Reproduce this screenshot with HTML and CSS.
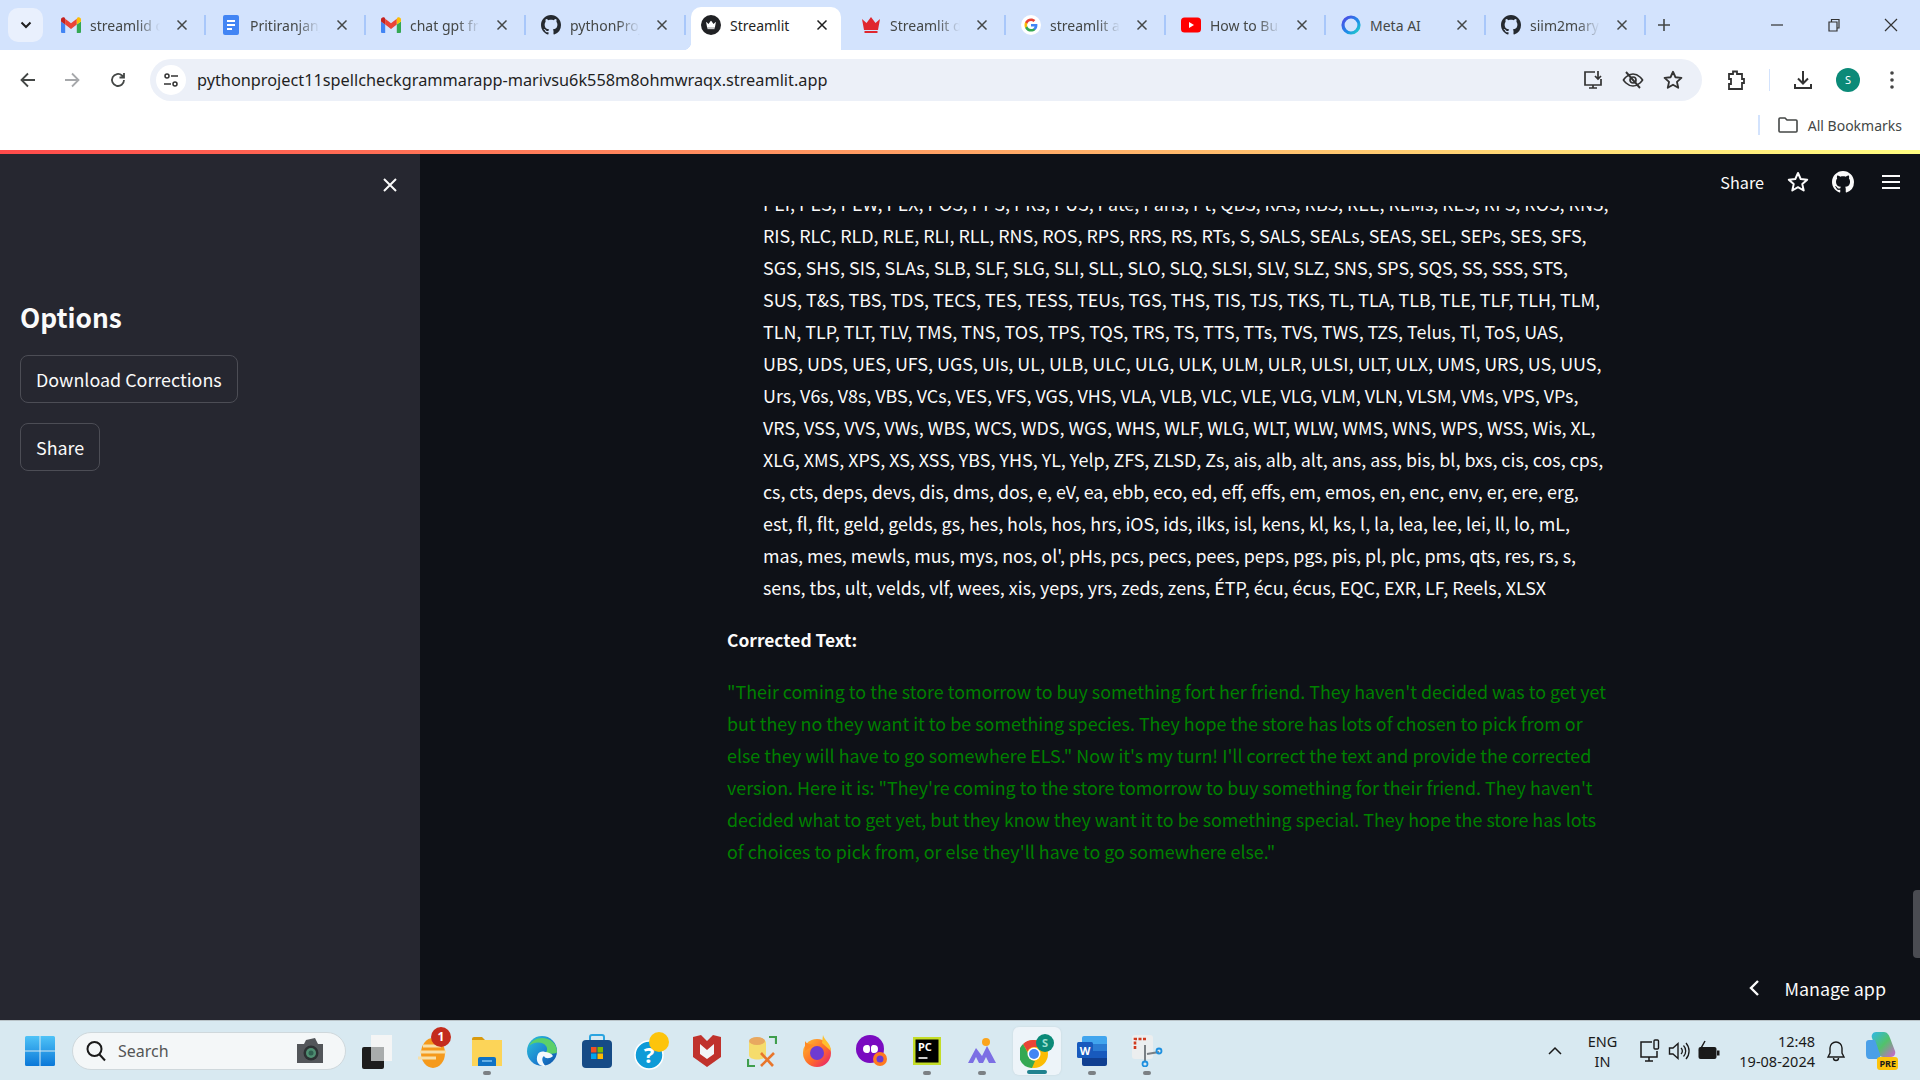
FILE: index.html
```html
<!DOCTYPE html>
<html>
<head>
	<title>Streamlit</title>
	<meta charset="UTF-8">
	<link rel="stylesheet" href="styles.css">
</head>
<body>
	<svg class="defs" width="0" height="0">
		<symbol id="gh" viewBox="0 0 16 16"><path d="M8 0C3.58 0 0 3.58 0 8c0 3.54 2.29 6.53 5.47 7.59.4.07.55-.17.55-.38 0-.19-.01-.82-.01-1.49-2.01.37-2.53-.49-2.69-.94-.09-.23-.48-.94-.82-1.13-.28-.15-.68-.52-.01-.53.63-.01 1.08.58 1.23.82.72 1.21 1.87.87 2.33.66.07-.52.28-.87.51-1.07-1.78-.2-3.64-.89-3.64-3.95 0-.87.31-1.59.82-2.15-.08-.2-.36-1.02.08-2.12 0 0 .67-.21 2.2.82.64-.18 1.32-.27 2-.27s1.36.09 2 .27c1.53-1.04 2.2-.82 2.2-.82.44 1.1.16 1.92.08 2.12.51.56.82 1.27.82 2.15 0 3.07-1.87 3.75-3.65 3.95.29.25.54.73.54 1.48 0 1.07-.01 1.93-.01 2.2 0 .21.15.46.55.38A8.01 8.01 0 0 0 16 8c0-4.42-3.58-8-8-8z"/></symbol>
		<symbol id="gmail" viewBox="0 0 20 16"><path fill="#4285f4" d="M1 16h3.2V7.6L0 4.4V15a1 1 0 0 0 1 1z"/><path fill="#34a853" d="M15.800 16H19a1 1 0 0 0 1-1V4.400l-4.200 3.200z"/><path fill="#ea4335" d="M4.200 7.600V1.800L10 6.200l5.800-4.400v5.800L10 12z"/><path fill="#fbbc04" d="M15.800 1.800v5.800L20 4.400V2.500C20 .6 17.800-.5 16.300.7z"/><path fill="#c5221f" d="M0 4.400l4.200 3.200V1.800L3.700.7C2.200-.5 0 .6 0 2.500z"/></symbol>
		<symbol id="x" viewBox="0 0 12 12"><path d="M1.500 1.500l9 9M10.500 1.500l-9 9" fill="none" stroke="currentColor" stroke-width="1.500"/></symbol>
		<symbol id="crown" viewBox="0 0 20 16"><path d="M1 2l4.500 4L10 0l4.500 6L19 2l-2 11H3zM3.500 14h13v2h-13z"/></symbol>
		<symbol id="star" viewBox="0 0 24 24"><path d="M12 3l2.700 6 6.500.700-4.900 4.400 1.400 6.400L12 17.200l-5.700 3.300 1.400-6.400-4.900-4.400 6.500-.700z" fill="none" stroke="currentColor" stroke-width="2" stroke-linejoin="round"/></symbol>
	</svg>

	<div class="screen">
		<!-- tab strip -->
		<div class="tabstrip">
			<div class="tab-menu"><svg width="12" height="8" viewBox="0 0 12 8"><path d="M1.500 1.500L6 6l4.500-4.500" fill="none" stroke="#1f1f1f" stroke-width="2"/></svg></div>
			<div class="tab"><svg class="favicon" viewBox="0 0 20 16"><use href="#gmail"/></svg><span class="tab-title">streamlid c</span><svg class="tab-close"><use href="#x"/></svg></div>
			<div class="tab">
				<svg class="favicon" viewBox="0 0 20 20"><rect x="2" y="0" width="16" height="20" rx="2" fill="#4285f4"/><path d="M6 6h8M6 10h8M6 14h5" stroke="#fff" stroke-width="1.800"/></svg>
				<span class="tab-title">Pritiranjan_</span><svg class="tab-close"><use href="#x"/></svg>
			</div>
			<div class="tab"><svg class="favicon" viewBox="0 0 20 16"><use href="#gmail"/></svg><span class="tab-title">chat gpt fr</span><svg class="tab-close"><use href="#x"/></svg></div>
			<div class="tab"><svg class="favicon gh-icon"><use href="#gh"/></svg><span class="tab-title">pythonProj</span><svg class="tab-close"><use href="#x"/></svg></div>
			<div class="tab tab-active">
				<svg class="favicon" viewBox="0 0 20 20"><circle cx="10" cy="10" r="10" fill="#202124"/><svg x="4.500" y="5.500" width="11" height="9" fill="#fff"><use href="#crown"/></svg></svg>
				<span class="tab-title title-full">Streamlit</span><svg class="tab-close"><use href="#x"/></svg>
			</div>
			<div class="tab"><svg class="favicon crown-red"><use href="#crown"/></svg><span class="tab-title">Streamlit d</span><svg class="tab-close"><use href="#x"/></svg></div>
			<div class="tab">
				<svg class="favicon" viewBox="0 0 20 20"><circle cx="10" cy="10" r="10" fill="#fff"/><path d="M16.400 10.200c0-.5 0-.9-.1-1.300H10v2.500h3.600c-.2.800-.6 1.500-1.300 2v1.600h2.100c1.300-1.100 2-2.800 2-4.800z" fill="#4285f4"/><path d="M10 16.600c1.800 0 3.300-.6 4.400-1.600l-2.100-1.600c-.6.400-1.400.6-2.300.6-1.700 0-3.200-1.200-3.700-2.800H4.100v1.700c1.100 2.200 3.300 3.700 5.900 3.700z" fill="#34a853"/><path d="M6.300 11.200c-.3-.8-.3-1.600 0-2.400V7.100H4.100c-.8 1.800-.8 4 0 5.800z" fill="#fbbc04"/><path d="M10 6c1 0 1.800.3 2.500 1l1.900-1.900C13.200 4 11.700 3.400 10 3.400c-2.600 0-4.800 1.500-5.900 3.700l2.200 1.700C6.800 7.200 8.300 6 10 6z" fill="#ea4335"/></svg>
				<span class="tab-title">streamlit a</span><svg class="tab-close"><use href="#x"/></svg>
			</div>
			<div class="tab">
				<svg class="favicon" viewBox="0 0 20 20"><rect y="2.500" width="20" height="15" rx="3.500" fill="#f00"/><path d="M8 7l5 3-5 3z" fill="#fff"/></svg>
				<span class="tab-title">How to Bu</span><svg class="tab-close"><use href="#x"/></svg>
			</div>
			<div class="tab">
				<svg class="favicon" viewBox="0 0 20 20"><defs><linearGradient id="meta" x1="0" y1="0" x2="1" y2="1"><stop offset="0" stop-color="#4f46e5"/><stop offset=".6" stop-color="#1d8fe8"/><stop offset="1" stop-color="#22d3c5"/></linearGradient></defs><circle cx="10" cy="10" r="8" fill="none" stroke="url(#meta)" stroke-width="3.200"/></svg>
				<span class="tab-title title-full">Meta AI</span><svg class="tab-close"><use href="#x"/></svg>
			</div>
			<div class="tab"><svg class="favicon gh-icon"><use href="#gh"/></svg><span class="tab-title">siim2mary</span><svg class="tab-close"><use href="#x"/></svg></div>
			<div class="tab-new"><svg width="14" height="14" viewBox="0 0 14 14"><path d="M7 1v12M1 7h12" stroke="#444746" stroke-width="1.600"/></svg></div>
			<div class="win-btns">
				<svg width="14" height="14" viewBox="0 0 14 14"><path d="M1 7h12" stroke="#333" stroke-width="1.200"/></svg>
				<svg width="14" height="14" viewBox="0 0 14 14"><path d="M2 4h8v9H2zM4.500 4V1.500h7.500V10H10" fill="none" stroke="#333" stroke-width="1.200"/></svg>
				<svg width="14" height="14" viewBox="0 0 14 14"><path d="M1 1l12 12M13 1L1 13" stroke="#333" stroke-width="1.200"/></svg>
			</div>
		</div>

		<!-- address bar -->
		<div class="toolbar">
			<svg class="nav-icon" viewBox="0 0 20 20"><path d="M17 10H4M10 3.500L3.500 10l6.500 6.500" fill="none" stroke="#444746" stroke-width="1.800"/></svg>
			<svg class="nav-icon" viewBox="0 0 20 20"><path d="M3 10h13M10 3.500l6.500 6.500-6.500 6.500" fill="none" stroke="#a6a8ab" stroke-width="1.800"/></svg>
			<svg class="nav-icon" viewBox="0 0 20 20"><path d="M16 10a6 6 0 1 1-2-4.500L16 7.500M16 3v4.500h-4.500" fill="none" stroke="#444746" stroke-width="1.800"/></svg>
			<div class="omnibox">
				<span class="site-info">
					<svg width="16" height="16" viewBox="0 0 16 16"><circle cx="4" cy="4" r="2" fill="none" stroke="#333" stroke-width="1.500"/><circle cx="12" cy="12" r="2" fill="none" stroke="#333" stroke-width="1.500"/><path d="M8 4h7M1 12h7" stroke="#333" stroke-width="1.500"/></svg>
				</span>
				<span class="url">pythonproject11spellcheckgrammarapp-marivsu6k558m8ohmwraqx.streamlit.app</span>
				<span class="omni-icons">
					<svg width="22" height="22" viewBox="0 0 22 22"><path d="M13 3H3v13h16v-6M7 19h8M11 16v3M16 2v8M13 7l3 3 3-3" fill="none" stroke="#333" stroke-width="1.700"/></svg>
					<svg width="22" height="22" viewBox="0 0 22 22"><path d="M1.500 11S5 5 11 5s9.500 6 9.500 6-3.500 6-9.500 6-9.500-6-9.500-6z" fill="none" stroke="#333" stroke-width="1.700"/><circle cx="11" cy="11" r="3" fill="none" stroke="#333" stroke-width="1.700"/><path d="M4 3l14 16" stroke="#333" stroke-width="1.900"/></svg>
					<svg class="omni-star" width="22" height="22"><use href="#star"/></svg>
				</span>
			</div>
			<svg class="ext-icon" width="22" height="22" viewBox="0 0 22 22"><path d="M4 5h4V2.500h4V5h5v5h2v4h-2v6H4v-5h2v-5H4z" fill="none" stroke="#333" stroke-width="1.800"/></svg>
			<span class="tool-sep"></span>
			<svg class="dl-icon" width="22" height="22" viewBox="0 0 22 22"><path d="M11 2v12M6 9.500l5 5 5-5M3 15v4h16v-4" fill="none" stroke="#333" stroke-width="2"/></svg>
			<span class="avatar">S</span>
			<svg class="kebab" width="4" height="18" viewBox="0 0 4 18"><circle cx="2" cy="2" r="1.800" fill="#444"/><circle cx="2" cy="9" r="1.800" fill="#444"/><circle cx="2" cy="16" r="1.800" fill="#444"/></svg>
		</div>

		<div class="bookmarks">
			<span class="book-sep"></span>
			<svg width="20" height="18" viewBox="0 0 20 18"><path d="M1 3a1 1 0 0 1 1-1h5l2 2h9a1 1 0 0 1 1 1v10a1 1 0 0 1-1 1H2a1 1 0 0 1-1-1z" fill="none" stroke="#444746" stroke-width="1.600"/></svg>
			<span class="book-label">All Bookmarks</span>
		</div>

		<div class="deco-line"></div>

		<!-- streamlit app -->
		<div class="app">
			<aside class="sidebar">
				<div class="side-close"><svg width="16" height="16"><use href="#x"/></svg></div>
				<h2 class="side-title">Options</h2>
				<button class="st-btn">Download Corrections</button>
				<button class="st-btn">Share</button>
			</aside>
			<main class="main">
				<header class="st-header">
					<span class="st-share">Share</span>
					<svg class="st-star" width="24" height="24"><use href="#star"/></svg>
					<svg class="st-gh"><use href="#gh"/></svg>
					<svg class="st-menu" width="20" height="16" viewBox="0 0 20 16"><path d="M1 2h18M1 8h18M1 14h18" stroke="#fafafa" stroke-width="2"/></svg>
				</header>
				<div class="scroll-view">
					<div class="content">
						<p class="word-list">
							PEI, PES, PEW, PEX, POS, PPS, PRs, PUS, Pate, Paris, Pt, QBS, RAs, RBS, REE, REMs, RES, RFS, ROS, RNS,<br>
							RIS, RLC, RLD, RLE, RLI, RLL, RNS, ROS, RPS, RRS, RS, RTs, S, SALS, SEALs, SEAS, SEL, SEPs, SES, SFS,<br>
							SGS, SHS, SIS, SLAs, SLB, SLF, SLG, SLI, SLL, SLO, SLQ, SLSI, SLV, SLZ, SNS, SPS, SQS, SS, SSS, STS,<br>
							SUS, T&amp;S, TBS, TDS, TECS, TES, TESS, TEUs, TGS, THS, TIS, TJS, TKS, TL, TLA, TLB, TLE, TLF, TLH, TLM,<br>
							TLN, TLP, TLT, TLV, TMS, TNS, TOS, TPS, TQS, TRS, TS, TTS, TTs, TVS, TWS, TZS, Telus, Tl, ToS, UAS,<br>
							UBS, UDS, UES, UFS, UGS, UIs, UL, ULB, ULC, ULG, ULK, ULM, ULR, ULSI, ULT, ULX, UMS, URS, US, UUS,<br>
							Urs, V6s, V8s, VBS, VCs, VES, VFS, VGS, VHS, VLA, VLB, VLC, VLE, VLG, VLM, VLN, VLSM, VMs, VPS, VPs,<br>
							VRS, VSS, VVS, VWs, WBS, WCS, WDS, WGS, WHS, WLF, WLG, WLT, WLW, WMS, WNS, WPS, WSS, Wis, XL,<br>
							XLG, XMS, XPS, XS, XSS, YBS, YHS, YL, Yelp, ZFS, ZLSD, Zs, ais, alb, alt, ans, ass, bis, bl, bxs, cis, cos, cps,<br>
							cs, cts, deps, devs, dis, dms, dos, e, eV, ea, ebb, eco, ed, eff, effs, em, emos, en, enc, env, er, ere, erg,<br>
							est, fl, flt, geld, gelds, gs, hes, hols, hos, hrs, iOS, ids, ilks, isl, kens, kl, ks, l, la, lea, lee, lei, ll, lo, mL,<br>
							mas, mes, mewls, mus, mys, nos, ol', pHs, pcs, pecs, pees, peps, pgs, pis, pl, plc, pms, qts, res, rs, s,<br>
							sens, tbs, ult, velds, vlf, wees, xis, yeps, yrs, zeds, zens, ÉTP, écu, écus, EQC, EXR, LF, Reels, XLSX
						</p>
						<p class="result-label">Corrected Text:</p>
						<p class="result-text">
							"Their coming to the store tomorrow to buy something fort her friend. They haven't decided was to get yet<br>
							but they no they want it to be something species. They hope the store has lots of chosen to pick from or<br>
							else they will have to go somewhere ELS." Now it's my turn! I'll correct the text and provide the corrected<br>
							version. Here it is: "They're coming to the store tomorrow to buy something for their friend. They haven't<br>
							decided what to get yet, but they know they want it to be something special. They hope the store has lots<br>
							of choices to pick from, or else they'll have to go somewhere else."
						</p>
					</div>
				</div>
				<div class="scroll-thumb"></div>
				<div class="manage-app">
					<svg width="12" height="18" viewBox="0 0 12 18"><path d="M10 2L3 9l7 7" fill="none" stroke="#fafafa" stroke-width="2.400"/></svg>
					<span>Manage app</span>
				</div>
			</main>
		</div>

		<!-- windows taskbar -->
		<div class="taskbar">
			<svg class="win-logo" width="30" height="30" viewBox="0 0 30 30"><defs><linearGradient id="wl" x1="0" y1="0" x2="0" y2="1"><stop offset="0" stop-color="#4fc3f7"/><stop offset="1" stop-color="#0a78d8"/></linearGradient></defs><path d="M0 1.500A1.500 1.500 0 0 1 1.500 0h13v14.500H0zM15.500 0H28.500A1.500 1.500 0 0 1 30 1.500v13H15.500zM0 15.500h14.500V30H1.500A1.500 1.500 0 0 1 0 28.500zM15.500 15.500H30v13a1.500 1.500 0 0 1-1.500 1.500H15.500z" fill="url(#wl)"/></svg>
			<div class="search-box">
				<svg width="22" height="22" viewBox="0 0 22 22"><circle cx="9.500" cy="9" r="7" fill="none" stroke="#1a1a1a" stroke-width="2"/><path d="M14.500 14.500l5.500 6" stroke="#1a1a1a" stroke-width="2"/></svg>
				<span class="search-text">Search</span>
				<svg class="search-cam" width="30" height="28" viewBox="0 0 30 28"><path d="M2 7h7l2-4 9-2 3 6h5v19H2z" fill="#53565a"/><circle cx="16" cy="16" r="7.500" fill="#2c3133"/><circle cx="16" cy="16" r="5" fill="#4f8f72"/><circle cx="16" cy="16" r="2.500" fill="#2f5f50"/></svg>
			</div>
			<div class="task-icons">
				<div class="task-icon"><svg width="34" height="40" viewBox="0 0 34 40"><rect x="2" y="16" width="22" height="22" rx="2" fill="#1d1d1d"/><rect x="11" y="4" width="21" height="26" fill="#f4f5f5"/><rect x="11" y="16" width="13" height="14" fill="#a9acac"/></svg></div>
				<div class="task-icon">
					<svg width="32" height="36" viewBox="0 0 32 36"><ellipse cx="17" cy="20" rx="12" ry="15" fill="#f59a1c"/><path d="M7 13h18M4 19h26M2 25h18" stroke="#f8e0a8" stroke-width="3"/></svg>
					<span class="badge">1</span>
				</div>
				<div class="task-icon task-dot">
					<svg width="30" height="30" viewBox="0 0 30 30"><path d="M0 3a2 2 0 0 1 2-2h8l3 3h-13z" fill="#d99a0e"/><path d="M0 4h30v26H0z" fill="#fcd458"/><path d="M8 21h14a2 2 0 0 1 2 2v7H6v-7a2 2 0 0 1 2-2z" fill="#0f72c4"/><path d="M10 25h10" stroke="#7fc3f0" stroke-width="1.500"/></svg>
				</div>
				<div class="task-icon">
					<svg width="30" height="30" viewBox="0 0 30 30"><defs><linearGradient id="edge" x1="0" y1="0" x2="1" y2="1"><stop offset="0" stop-color="#2fc4d8"/><stop offset=".6" stop-color="#1a7fd0"/><stop offset="1" stop-color="#0c4fa0"/></linearGradient></defs><circle cx="15" cy="15" r="15" fill="url(#edge)"/><path d="M30 16C30 7 23 2 15 2 9 2 4 5 2 10c4-4 13-5 17 0 2 3 1 6-1 7 4 1 12 1 12-1z" fill="#5bd06a"/><path d="M19 30c-8 1-11-6-8-12 1-2 4-3 7-2 3 0 6 1 8 4-3 3-8 3-9 0-4 3 0 9 2 10z" fill="#fff" opacity=".95"/></svg>
				</div>
				<div class="task-icon">
					<svg width="30" height="34" viewBox="0 0 30 34"><path d="M8 8V3a2 2 0 0 1 2-2h10a2 2 0 0 1 2 2v5" fill="none" stroke="#2ba4e0" stroke-width="2"/><rect y="6" width="30" height="28" rx="4" fill="#164b86"/><rect x="9" y="13" width="5.500" height="5.500" fill="#f25022"/><rect x="15.500" y="13" width="5.500" height="5.500" fill="#7fba00"/><rect x="9" y="19.500" width="5.500" height="5.500" fill="#00a4ef"/><rect x="15.500" y="19.500" width="5.500" height="5.500" fill="#ffb900"/></svg>
				</div>
				<div class="task-icon">
					<svg width="36" height="38" viewBox="0 0 36 38"><circle cx="15" cy="23" r="14" fill="#0f9bd7" stroke="#fff" stroke-width="1.500"/><text x="15" y="31" class="help-mark">?</text><circle cx="25" cy="10" r="10" fill="#fdc40c"/></svg>
				</div>
				<div class="task-icon">
					<svg width="28" height="32" viewBox="0 0 28 32"><path d="M0 2l8-2 6 6 6-6 8 2v20L14 32 0 22z" fill="#c0322c"/><path d="M7 9l7 6 7-6v10l-7 5-7-5z" fill="#f2f6f8"/></svg>
				</div>
				<div class="task-icon">
					<svg width="30" height="32" viewBox="0 0 30 32"><path d="M2 8c0-7 17-7 17 0v12c0 6-17 6-17 0z" fill="#f5dc6c"/><ellipse cx="10" cy="6" rx="8" ry="4" fill="#e8a860"/><path d="M22 2h7v7M1 24v7h7M27 2h2" fill="none" stroke="#3f9e4d" stroke-width="2.200"/><path d="M14 18l12 13M27 18L14 31" stroke="#e8762c" stroke-width="2.600"/></svg>
				</div>
				<div class="task-icon">
					<svg width="30" height="32" viewBox="0 0 30 32"><defs><linearGradient id="ff" x1="0" y1="0" x2="1" y2="1"><stop offset="0" stop-color="#ffc02e"/><stop offset=".55" stop-color="#ff6b2a"/><stop offset="1" stop-color="#e3157a"/></linearGradient></defs><circle cx="15" cy="18" r="14" fill="url(#ff)"/><path d="M21 0c1 5 8 8 8 16L20 8z" fill="#ffc02e"/><path d="M3 6c1 2 3 3 4 3l5 1L3 16z" fill="#ff8a25"/><circle cx="15" cy="18" r="7" fill="#6e3bd1"/></svg>
				</div>
				<div class="task-icon">
					<svg width="32" height="32" viewBox="0 0 32 32"><circle cx="14" cy="14" r="14" fill="#7a0bc0"/><path d="M11 10a4 4 0 1 0 0 8c3 0 3-2 3-4s0-4-3-4zM18 10a4 4 0 1 1 0 8c-3 0-3-2-3-4s0-4 3-4z" fill="#fff"/><circle cx="24" cy="24" r="7" fill="#ff7a20"/><circle cx="24" cy="24" r="3.500" fill="#6e3bd1"/></svg>
				</div>
				<div class="task-icon task-dot">
					<svg width="28" height="28" viewBox="0 0 28 28"><rect width="28" height="28" fill="#c4dd28"/><rect x="2.500" y="2.500" width="23" height="23" fill="#000"/><text x="5" y="14" class="pc-mark">PC</text><path d="M5.500 21h9" stroke="#fff" stroke-width="1.600"/></svg>
				</div>
				<div class="task-icon task-dot">
					<svg width="30" height="28" viewBox="0 0 30 28"><circle cx="19" cy="5" r="4" fill="#fba41c"/><path d="M1 26L9 11l6 8 5-10 9 17h-7l-3-6-3 6h-4l-3-6-3 6z" fill="#7c6fe4"/></svg>
				</div>
				<div class="task-icon task-active">
					<svg width="34" height="34" viewBox="0 0 34 34"><circle cx="14" cy="20" r="14" fill="#fbbc04"/><path d="M14 6a14 14 0 0 1 12 7H14a7 7 0 0 0-6.500 4.500L3 10A14 14 0 0 1 14 6z" fill="#ea4335"/><path d="M3 10l6 11a7 7 0 0 0 6 6l-3 7A14 14 0 0 1 3 10z" fill="#34a853"/><circle cx="14" cy="20" r="6.500" fill="#fff"/><circle cx="14" cy="20" r="5" fill="#4285f4"/><circle cx="25" cy="9" r="9" fill="#0b8a78"/><text x="25" y="13" class="chrome-mark">S</text></svg>
				</div>
				<div class="task-icon task-dot">
					<svg width="30" height="30" viewBox="0 0 30 30"><path d="M7 0h21a2 2 0 0 1 2 2v6H5V2a2 2 0 0 1 2-2z" fill="#41a5ee"/><rect x="5" y="8" width="25" height="7" fill="#2b7cd3"/><rect x="5" y="15" width="25" height="7" fill="#185abd"/><path d="M5 22h25v6a2 2 0 0 1-2 2H7a2 2 0 0 1-2-2z" fill="#103f91"/><rect y="6" width="16" height="16" rx="1.500" fill="#185abd"/><text x="8" y="19" class="word-mark">W</text></svg>
				</div>
				<div class="task-icon task-dot">
					<svg width="32" height="32" viewBox="0 0 32 32"><rect x="1" y="0" width="21" height="24" rx="3" fill="#eceeef"/><path d="M4 14V4h12" fill="none" stroke="#d13a1e" stroke-width="2.600" stroke-dasharray="3 1.500"/><path d="M14 10v16M16 19l12-2" stroke="#7a7f84" stroke-width="2"/><circle cx="28" cy="16" r="2.500" fill="none" stroke="#1e90e0" stroke-width="1.800"/><circle cx="14" cy="29" r="2.500" fill="none" stroke="#1e90e0" stroke-width="1.800"/></svg>
				</div>
			</div>
			<div class="tray">
				<svg class="tray-up" width="14" height="9" viewBox="0 0 14 9"><path d="M1 8l6-6 6 6" fill="none" stroke="#1a1a1a" stroke-width="1.500"/></svg>
				<div class="lang">ENG<br>IN</div>
				<div class="tray-icons">
					<svg width="22" height="24" viewBox="0 0 22 24"><path d="M13 3H2v15h16v-6M6 22h8M10 18v4" fill="none" stroke="#1a1a1a" stroke-width="1.500"/><rect x="15" y="1" width="4.500" height="9" rx="1" fill="none" stroke="#1a1a1a" stroke-width="1.400"/></svg>
					<svg width="22" height="22" viewBox="0 0 22 22"><path d="M1.500 8h3.500l5-4.500v15L5 14H1.500z" fill="none" stroke="#1a1a1a" stroke-width="1.400"/><path d="M13 8a4 4 0 0 1 0 6M15.500 5.500a8 8 0 0 1 0 11M18 3a12 12 0 0 1 0 16" fill="none" stroke="#1a1a1a" stroke-width="1.300"/></svg>
					<svg width="24" height="22" viewBox="0 0 24 22"><rect x="1.500" y="7" width="18" height="12" rx="2" fill="#1a1a1a"/><rect x="20" y="10.500" width="2.500" height="5" fill="#1a1a1a"/><path d="M8 1L3 10h4l-1 6" fill="none" stroke="#1a1a1a" stroke-width="1.500"/></svg>
				</div>
				<div class="clock">12:48<br>19-08-2024</div>
				<svg class="bell" width="20" height="22" viewBox="0 0 20 22"><path d="M10 2a6 6 0 0 0-6 6v5l-2 4h16l-2-4V8a6 6 0 0 0-6-6zM7.500 18a2.500 2.500 0 0 0 5 0" fill="none" stroke="#1a1a1a" stroke-width="1.400"/></svg>
				<div class="copilot">
					<svg width="30" height="28" viewBox="0 0 30 28"><defs><linearGradient id="cp" x1="0" y1="0" x2="1" y2="1"><stop offset="0" stop-color="#2fb8e8"/><stop offset=".5" stop-color="#52c26a"/><stop offset="1" stop-color="#d35fd0"/></linearGradient></defs><path d="M10 0h8c3 0 5 3 6 6l5 13c1 3-1 6-4 6h-8c-3 0-5-3-6-6L6 6C5 3 7 0 10 0z" fill="url(#cp)"/><path d="M3 8h6l5 14c1 3-1 5-4 5H4c-3 0-4-2-4-5V11c0-2 1-3 3-3z" fill="#4a9fe8"/></svg>
					<span class="pre-tag">PRE</span>
				</div>
			</div>
		</div>
	</div>
</body>
</html>
```

FILE: styles.css
```css
*{
	margin: 0;
	padding: 0;
	box-sizing: border-box;
}
html,body{
	height: 100%;
	overflow: hidden;
}
body{
	font-family: "Noto Sans", "Liberation Sans", sans-serif;
	background: #fff;
}
.defs{
	display: block;
	height: 0;
}
.screen{
	width: 1920px;
	height: 1080px;
	display: flex;
	flex-direction: column;
}

/* tabs */
.tabstrip{
	height: 50px;
	background: #d3e3fd;
	display: flex;
	align-items: flex-end;
	padding-left: 8px;
	flex: none;
}
.tab-menu{
	width: 35px;
	height: 34px;
	margin: 0 3px 8px 0;
	border-radius: 10px;
	background: #e9f0fd;
	display: flex;
	align-items: center;
	justify-content: center;
}
.tab{
	width: 160px;
	height: 43px;
	padding: 0 18px 7px 15px;
	display: flex;
	align-items: center;
	position: relative;
	color: #444746;
	font-size: 14px;
}
.tab::after{
	content: "";
	position: absolute;
	right: 0;
	top: 8px;
	height: 20px;
	border-right: 2px solid #a8c7fa;
}
.tab:nth-child(6)::after{
	display: none;
}
.tab-active{
	width: 150px;
	margin: 0 5px;
	padding: 0 13px 7px 10px;
	background: #fff;
	color: #1f1f1f;
	border-radius: 10px 10px 0 0;
}
/* the curved feet of the selected tab */
.tab-active::before,
.tab-active::after{
	content: "";
	position: absolute;
	top: auto;
	bottom: 0;
	width: 8px;
	height: 8px;
	border: 0;
}
.tab-active::before{
	left: -8px;
	background: radial-gradient(circle at 0 0, transparent 8px, #fff 8.500px);
}
.tab-active::after{
	right: -8px;
	background: radial-gradient(circle at 100% 0, transparent 8px, #fff 8.500px);
}
.favicon{
	width: 20px;
	height: 20px;
	flex: none;
}
.gh-icon{
	fill: #24292f;
}
.crown-red{
	fill: #e0262f;
}
.tab-title{
	width: 76px;
	margin-left: 9px;
	white-space: nowrap;
	-webkit-mask-image: linear-gradient(to right, #000 62%, transparent 92%);
	mask-image: linear-gradient(to right, #000 62%, transparent 92%);
}
.title-full{
	-webkit-mask-image: none;
	mask-image: none;
}
.tab-close{
	width: 12px;
	height: 12px;
	margin-left: auto;
	color: #444746;
}
.tab-active .tab-close{
	color: #1f1f1f;
}
.tab-new{
	width: 34px;
	height: 34px;
	margin: 0 0 8px 1px;
	display: flex;
	align-items: center;
	justify-content: center;
}
.win-btns{
	margin-left: auto;
	height: 50px;
	display: flex;
	align-items: center;
	gap: 43px;
	padding-right: 22px;
}

/* address bar */
.toolbar{
	height: 60px;
	flex: none;
	display: flex;
	align-items: center;
	background: #fff;
	border-radius: 10px 10px 0 0;
	padding: 0 14px 0 18px;
}
.nav-icon{
	width: 20px;
	height: 20px;
	margin-right: 24px;
}
.nav-icon:nth-of-type(2){
	margin-right: 26px;
}
.nav-icon:nth-of-type(3){
	margin-right: 22px;
}
.omnibox{
	width: 1552px;
	height: 42px;
	background: #ecf0f8;
	border-radius: 21px;
	display: flex;
	align-items: center;
	padding: 0 18px 0 6px;
}
.site-info{
	width: 30px;
	height: 30px;
	background: #fff;
	border-radius: 50%;
	display: flex;
	align-items: center;
	justify-content: center;
}
.url{
	margin-left: 11px;
	font-size: 16.300px;
	color: #1f1f1f;
	white-space: nowrap;
}
.omni-icons{
	margin-left: auto;
	display: flex;
	align-items: center;
	gap: 18px;
}
.omni-star{
	color: #333;
}
.ext-icon{
	margin-left: 23px;
}
.tool-sep{
	width: 1px;
	height: 22px;
	background: #d3e3fd;
	margin: 0 22px;
}
.avatar{
	width: 24px;
	height: 24px;
	margin-left: 22px;
	border-radius: 50%;
	background: #0b8a78;
	color: #fff;
	font-size: 11px;
	line-height: 24px;
	text-align: center;
}
.kebab{
	margin-left: 30px;
}
.bookmarks{
	height: 40px;
	flex: none;
	display: flex;
	align-items: center;
	justify-content: flex-end;
	gap: 8px;
	padding: 0 18px 10px 0;
	background: #fff;
}
.book-sep{
	width: 2px;
	height: 20px;
	background: #d3e3fd;
	margin-right: 10px;
}
.book-label{
	margin-left: 2px;
	font-size: 14px;
	color: #444746;
}
.deco-line{
	height: 4px;
	flex: none;
	background: linear-gradient(90deg, #ff4b4b, #fffd80);
}

/* streamlit */
.app{
	flex: 1;
	display: flex;
	min-height: 0;
	font-family: "Noto Sans CJK SC", "Noto Sans", sans-serif;
	color: #fafafa;
	font-size: 17.900px;
}
.sidebar{
	width: 420px;
	flex: none;
	background: #262730;
	padding: 0 20px;
	display: flex;
	flex-direction: column;
	align-items: flex-start;
}
.side-close{
	align-self: flex-end;
	margin: 23px 2px 0 0;
	height: 16px;
}
.side-close svg{
	display: block;
}
.side-title{
	margin-top: 104px;
	font-size: 26.300px;
	font-weight: 700;
	line-height: 40px;
}
.st-btn{
	margin-top: 18px;
	height: 48px;
	padding: 0 15px;
	background: #262730;
	border: 1px solid #4c4d55;
	border-radius: 8px;
	color: #fafafa;
	font: inherit;
}
.st-btn + .st-btn{
	margin-top: 20px;
}
.main{
	flex: 1;
	min-width: 0;
	background: #0e1117;
	position: relative;
	display: flex;
	flex-direction: column;
}
.st-header{
	height: 52px;
	flex: none;
	display: flex;
	align-items: center;
	justify-content: flex-end;
	padding: 3px 19px 0 0;
	color: #fafafa;
}
.st-share{
	font-size: 16.200px;
}
.st-star{
	margin-left: 22px;
	color: #fafafa;
}
.st-gh{
	width: 22px;
	height: 22px;
	margin-left: 22px;
	fill: #fafafa;
}
.st-menu{
	margin-left: 27px;
}
.scroll-view{
	flex: 1;
	overflow: hidden;
}
.content{
	margin: -19px 0 0 307px;
	line-height: 32px;
	white-space: nowrap;
}
.word-list{
	padding-left: 36px;
}
.result-label{
	margin-top: 21px;
	font-size: 17.400px;
	font-weight: 700;
}
.result-text{
	margin-top: 19px;
	color: #008000;
}
.scroll-thumb{
	position: absolute;
	right: 0;
	top: 736px;
	width: 7px;
	height: 68px;
	background: #4a4c52;
	border-radius: 4px 0 0 4px;
}
.manage-app{
	position: absolute;
	right: 34px;
	bottom: 19px;
	display: flex;
	align-items: center;
	gap: 24px;
}

/* taskbar */
.taskbar{
	height: 60px;
	flex: none;
	display: flex;
	align-items: center;
	background: #d8e9f1;
	border-top: 1px solid #b9c3c8;
	padding-left: 25px;
	color: #1a1a1a;
}
.win-logo{
	flex: none;
}
.search-box{
	width: 274px;
	height: 38px;
	margin-left: 17px;
	background: #f4f7f8;
	border: 1px solid #cfd8dc;
	border-radius: 19px;
	display: flex;
	align-items: center;
	padding: 0 20px 0 12px;
}
.search-text{
	margin-left: 11px;
	font-size: 16px;
	color: #555;
}
.search-cam{
	margin-left: auto;
}
.task-icons{
	display: flex;
	margin-left: 3px;
}
.task-icon{
	width: 55px;
	height: 52px;
	position: relative;
	display: flex;
	align-items: center;
	justify-content: center;
	border-radius: 6px;
}
.task-dot::after{
	content: "";
	position: absolute;
	left: 50%;
	bottom: 2px;
	width: 8px;
	height: 4px;
	margin-left: -4px;
	border-radius: 2px;
	background: #7b8084;
}
.task-active{
	background: #edf4f9;
	box-shadow: 0 0 2px #c4d2da;
	width: 48px;
	height: 48px;
	margin: 2px 3.500px;
}
.task-active::after{
	content: "";
	position: absolute;
	left: 50%;
	bottom: 1px;
	width: 20px;
	height: 4px;
	margin-left: -10px;
	border-radius: 2px;
	background: #20828f;
}
.badge{
	position: absolute;
	right: 8px;
	top: 2px;
	width: 20px;
	height: 20px;
	border-radius: 50%;
	background: #c42b1c;
	color: #fff;
	font-size: 12px;
	font-weight: 700;
	line-height: 20px;
	text-align: center;
}
.help-mark{
	font: 700 22px "Noto Sans", sans-serif;
	fill: #fff;
	text-anchor: middle;
}
.pc-mark{
	font: 700 11px "Noto Sans", sans-serif;
	fill: #fff;
}
.chrome-mark{
	font: 700 11px "Noto Sans", sans-serif;
	fill: #9fe0d0;
	text-anchor: middle;
}
.word-mark{
	font: 700 11px "Noto Sans", sans-serif;
	fill: #fff;
	text-anchor: middle;
}
.tray{
	margin-left: auto;
	display: flex;
	align-items: center;
	font-size: 14.500px;
	padding-right: 24px;
}
.tray-up{
	flex: none;
}
.lang{
	margin-left: 26px;
	text-align: center;
	line-height: 20px;
}
.tray-icons{
	display: flex;
	align-items: center;
	gap: 7px;
	margin-left: 22px;
}
.clock{
	margin-left: 18px;
	text-align: right;
	line-height: 20px;
}
.bell{
	margin-left: 11px;
}
.copilot{
	position: relative;
	margin-left: 20px;
	width: 30px;
	height: 38px;
}
.pre-tag{
	position: absolute;
	right: -2px;
	bottom: 0;
	padding: 0 2px;
	background: #fdc40c;
	border-radius: 3px;
	color: #1a1a1a;
	font-size: 9px;
	font-weight: 700;
	line-height: 13px;
}
```
